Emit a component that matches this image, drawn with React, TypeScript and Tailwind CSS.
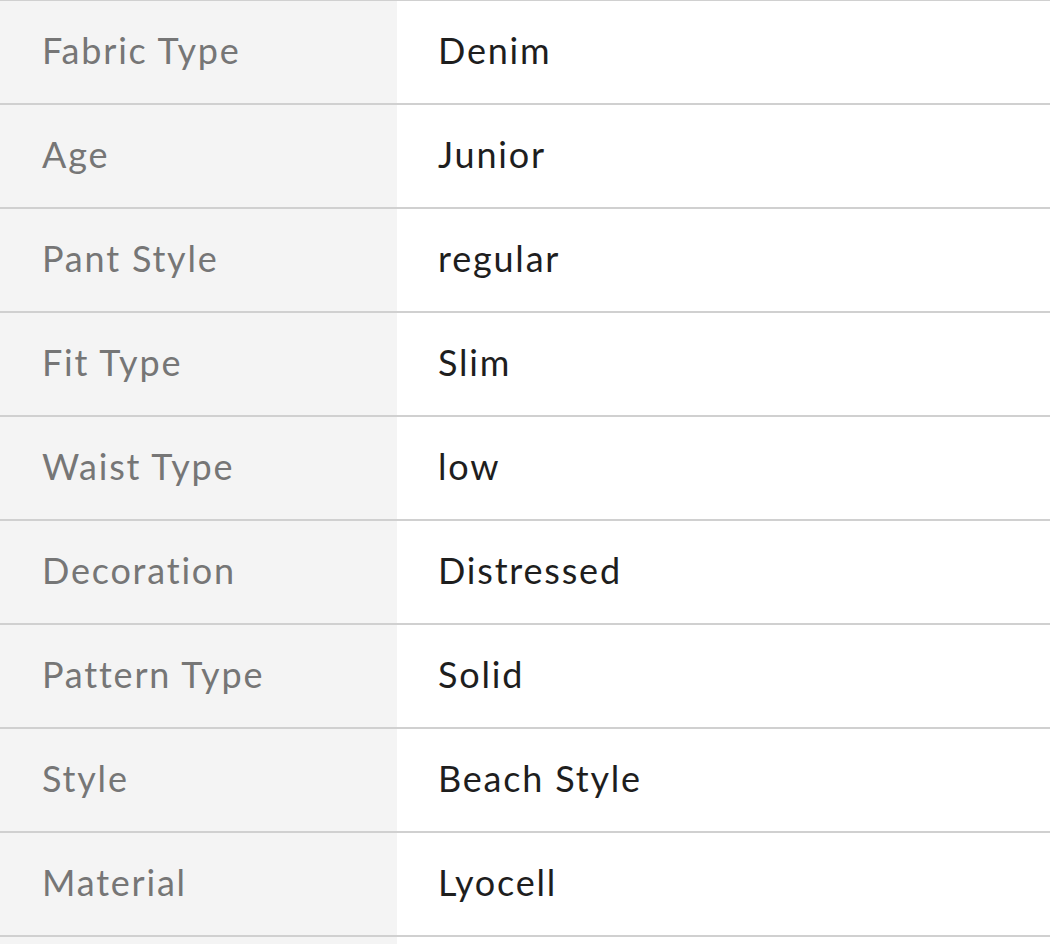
const rows: [string, string][] = [
  ["Fabric Type", "Denim"],
  ["Age", "Junior"],
  ["Pant Style", "regular"],
  ["Fit Type", "Slim"],
  ["Waist Type", "low"],
  ["Decoration", "Distressed"],
  ["Pattern Type", "Solid"],
  ["Style", "Beach Style"],
  ["Material", "Lyocell"],
  ["", ""],
];

export default function App() {
  return (
    <div className="h-[944px] w-[1050px] overflow-hidden bg-white font-['Lato',sans-serif] text-[36px] tracking-[0.05em]">
      <div className="-mt-px">
        {rows.map(([label, value], i) => (
          <div key={i} className="flex h-[104px] border-t-2 border-[#d0d0d0]">
            <div className="flex w-[397px] shrink-0 items-center bg-[#f4f4f4] pb-[5px] pl-[42px] text-[#767676]">
              {label}
            </div>
            <div className="flex flex-1 items-center pb-[5px] pl-[41px] text-[#1e1e1e]">
              {value}
            </div>
          </div>
        ))}
      </div>
    </div>
  );
}
